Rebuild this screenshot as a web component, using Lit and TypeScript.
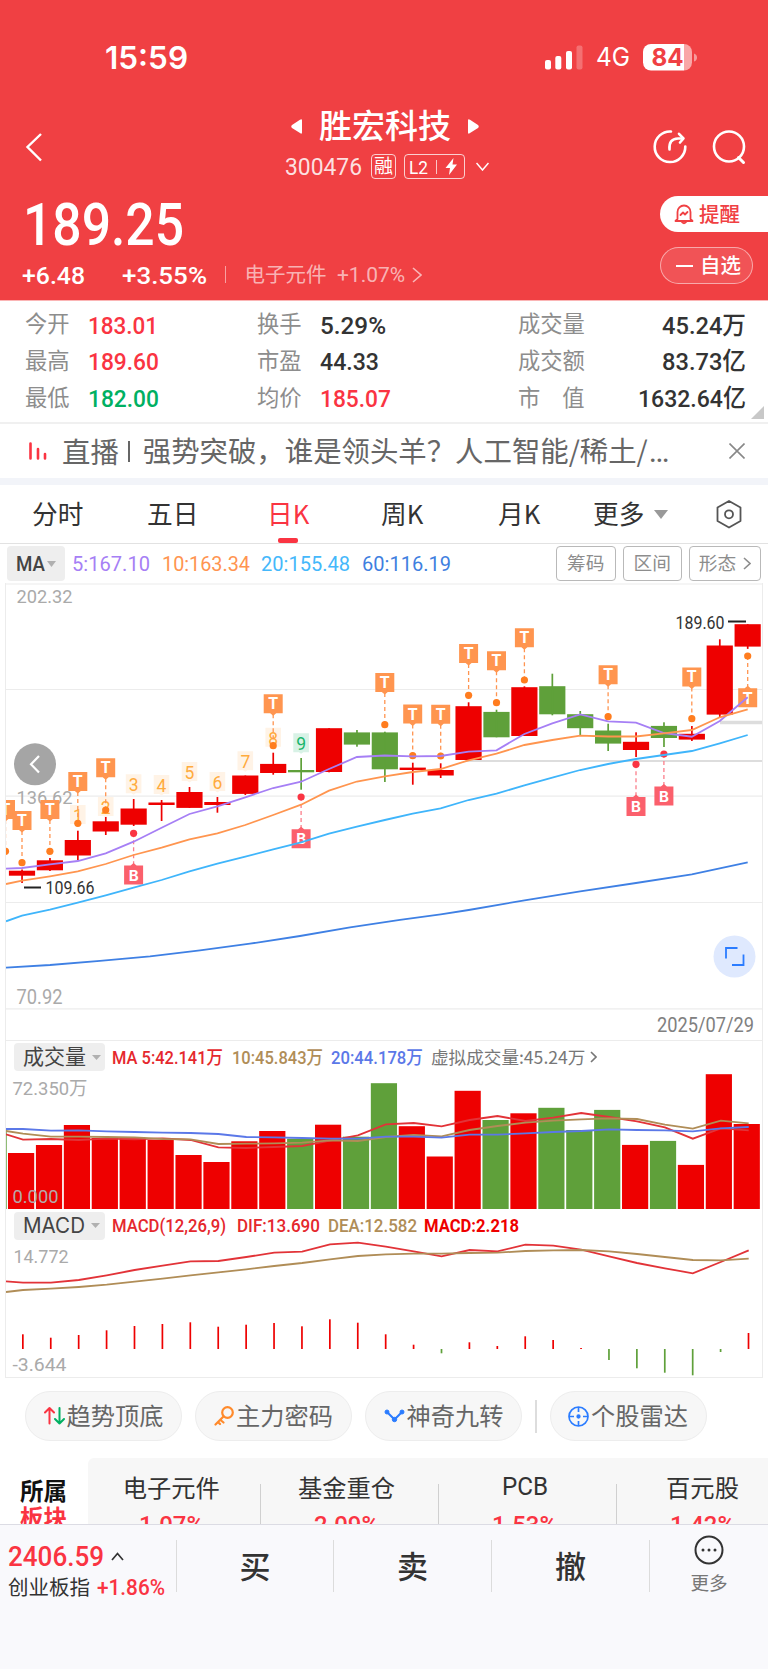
import { LitElement, html, svg, css } from "lit";
import { customElement } from "lit/decorators.js";

const STEP = 27.91;
const RED = "#ee0000";
const GREEN = "#5fa03a";

/** [bodyTop, bodyBottom, high, low, rising] in chart units */
const CANDLES: [number, number, number, number, number][] = [
  [870.7, 875.7, 869.5, 883, 1], [860.3, 870.3, 858, 871, 1], [840, 855.5, 830.7, 860, 1],
  [821.3, 831.5, 817, 835, 1], [808.5, 824.7, 799, 826, 1], [802.5, 805, 800, 821, 1],
  [792, 807.9, 787, 808, 1], [802, 805, 797, 812.7, 1], [775.5, 793.9, 775.5, 795, 1],
  [763.9, 773, 752.7, 774.7, 1], [770, 772.3, 758, 789.7, 0], [728.2, 772, 728.2, 772.3, 1],
  [732.4, 744.6, 730, 746.7, 0], [732.4, 769.3, 731.7, 782, 0], [767.6, 770, 762.7, 784.7, 1],
  [770, 775.5, 763.3, 778, 1], [706.2, 760, 702.3, 760, 1], [711.9, 737.3, 709.7, 737.3, 0],
  [687.2, 736, 686.3, 736, 1], [686.2, 714.3, 673.7, 715.3, 0], [714.2, 728.2, 711, 735.3, 0],
  [730.5, 743.6, 723.7, 751, 0], [741.8, 750, 732.3, 757, 1], [725.9, 738, 722.3, 747, 0],
  [733.8, 739.6, 726, 741, 1], [645.5, 714.6, 639.3, 718, 1], [624.2, 646.6, 624.2, 648.9, 1],
];

const MA5 = [868.7, 868, 864.3, 861, 853.3, 841.7, 827.7, 814, 806.3, 797.3, 788, 781.7, 769, 757, 755.5, 756.3, 756, 751.7, 750.3, 734, 723.3, 714.5, 721.3, 722.7, 733, 736.7, 721, 697.3];
const MA10 = [884, 880.7, 876.3, 871.3, 864, 855, 847.7, 839.3, 833.3, 825, 815, 804.7, 790.7, 781.5, 776.3, 772, 769, 760.3, 753.7, 745, 740, 735.7, 736.5, 736.5, 733.3, 730, 717.3, 709.3];
const MA20 = [921.3, 915.7, 909.7, 902.7, 895.3, 887.7, 880, 871.3, 863.7, 856.7, 849.3, 842.3, 833.7, 826.7, 820, 813.7, 808.3, 800, 793.7, 785.3, 777.7, 770, 764, 759, 755, 751, 743.3, 735];
const MA60 = "6,967.7 50,965 100,960.8 150,956.3 200,950.3 250,943.7 300,936 350,927.3 400,919.8 440.7,914.3 468.7,910 524.5,900.3 580.2,891.3 636,883 691.8,874.3 747.7,862.3";

/** [x, boxTop, dotY] */
const SELLS: [number, number, number][] = [
  [5.5, 800, 851.3], [22, 811, 862.7], [49.9, 800, 851.3], [77.8, 772, 823.3], [105.7, 758.3, 810],
  [273.2, 694.3, 745.7], [384.8, 673, 724.7], [412.7, 704.5, 755.7], [440.7, 704.8, 756], [468.6, 643.9, 695.3],
  [496.5, 651.2, 702.7], [524.4, 628.3, 680], [608.1, 665.3, 716.7], [691.8, 667.4, 718.7],
];
const BUYS: [number, number, number][] = [
  [133.6, 865.5, 833.3], [301.1, 829.2, 797], [636, 797, 764.3], [663.9, 786.6, 754],
];
const COUNTS: [number, number, string][] = [
  [77.8, 805, "1"], [105.7, 797, "2"], [133.6, 774.3, "3"], [161.5, 775, "4"], [189.5, 762, "5"],
  [217.4, 772, "6"], [245.3, 751.3, "7"], [273.2, 727.7, "8"], [301.1, 733.3, "9"],
];

const VOLUMES: [number, number][] = [
  [1153, 1], [1145, 1], [1125, 1], [1138, 1], [1138.3, 1], [1140, 1], [1155, 1], [1162, 1], [1141.3, 1],
  [1131, 1], [1138.7, 0], [1124.7, 1], [1136.7, 0], [1083.2, 0], [1126.2, 1], [1156.5, 1], [1090.8, 1],
  [1120, 0], [1113.3, 1], [1107.8, 0], [1130, 0], [1109.9, 0], [1144.9, 1], [1140.9, 0], [1164.9, 1],
  [1074.2, 1], [1124, 1],
];
const VOL5 = [1134.3, 1139.7, 1139, 1140, 1138.7, 1139.3, 1138.3, 1140, 1147.3, 1148, 1147, 1146, 1140.7, 1135.3, 1124.3, 1123, 1126.3, 1120, 1116, 1121, 1117.7, 1113, 1117, 1121.3, 1127.3, 1138.7, 1128.3, 1130.3];
const VOL10 = [1131, 1133.7, 1136.7, 1136.7, 1137, 1137.4, 1139, 1139.3, 1144, 1143.7, 1143.4, 1142.7, 1140.3, 1141, 1137, 1135, 1136.3, 1130, 1126, 1122.7, 1120.7, 1119.3, 1118.3, 1119, 1124.7, 1128.7, 1120.7, 1123.3];
const VOL20 = [1129, 1129, 1130.7, 1130.4, 1131.3, 1132, 1132.7, 1133, 1134, 1137, 1137.3, 1138, 1138.7, 1138.7, 1136.7, 1136.6, 1137.7, 1134.7, 1134.7, 1133.3, 1132, 1131, 1129.3, 1130, 1130.4, 1131.3, 1128.3, 1127];

const DIF = [1281.3, 1282.7, 1282.7, 1280, 1275.3, 1270, 1265.7, 1261.3, 1261, 1257, 1252.7, 1251.7, 1244.3, 1242.7, 1246.7, 1251.3, 1256.3, 1250, 1251.3, 1244.7, 1245.7, 1249.7, 1256.3, 1263, 1268.3, 1273.3, 1262, 1250.3];
const DEA = [1292, 1290, 1288.7, 1287, 1284.7, 1281.7, 1278.7, 1275.3, 1272.3, 1269.3, 1266, 1263, 1259.3, 1256, 1254.3, 1253.7, 1253.7, 1253, 1252.7, 1251, 1250.3, 1250, 1251.3, 1254, 1257, 1260, 1260.3, 1258.7];
const HIST = [1334.3, 1337.7, 1335, 1330.3, 1326, 1324, 1322.3, 1326.7, 1324.7, 1323, 1326.3, 1319.3, 1322.7, 1334.3, 1344.7, 1353.3, 1342.3, 1346, 1336.3, 1340, 1348, 1360, 1368.3, 1372.7, 1375.3, 1352, 1333];
const ZERO = 1349;

const polyline = (ys: number[], x0 = 22) =>
  ys.map((y, i) => (i === 0 ? `6,${y}` : `${(x0 + (i - 1) * STEP).toFixed(1)},${y}`)).join(" ");

/** Numeric label condensed to a fixed width; cap is the digit height. */
const fit = (text: string, width: number, cap: number, cls = "") => html`
  <svg class="fit ${cls}" width=${width} height=${cap}>
    <text x="0" y=${cap} font-size=${(cap / 0.711).toFixed(2)} textLength=${width} lengthAdjust="spacingAndGlyphs">${text}</text>
  </svg>`;

/** The same label placed inside a chart; y is its baseline. */
const label = (text: string, x: number, y: number, width: number, cap: number, fill: string) => svg`
  <text x=${x} y=${y} fill=${fill} font-size=${(cap / 0.711).toFixed(2)} textLength=${width} lengthAdjust="spacingAndGlyphs">${text}</text>`;

@customElement("app-root")
export class AppRoot extends LitElement {
  static styles = css`
    :host { display: block; width: 768px; height: 1669px; overflow: hidden; background: #fff;
      font-family: "Noto Sans CJK SC", sans-serif; color: #333; }
    * { box-sizing: border-box; }
    svg { display: block; flex: none; }
    .fit { overflow: visible; font-family: Roboto, "Noto Sans CJK SC", sans-serif; fill: currentColor; font-weight: 500; }
    .light { font-weight: 400; }
    .ui { font-family: Inter, sans-serif; font-weight: 600; }
    .uilight { font-family: Inter, sans-serif; font-weight: 400; }
    .heavy { font-weight: 700; }
    .row { display: flex; align-items: center; }
    .red { color: #fa3442; }
    .green { color: #00b062; }

    .head { background: #f04043; color: #fff; height: 301px; border-bottom: 1px solid #fbb5b5; }
    .status { height: 70px; padding: 44px 71px 0 105px; justify-content: space-between; }
    .status .right { display: flex; align-items: center; gap: 13px; }
    .nav { height: 118px; padding: 36px 21px 0 25px; display: grid; grid-template-columns: 100px 1fr 100px; align-items: center; }
    .mid { display: flex; flex-direction: column; align-items: center; height: 82px; }
    .title { display: flex; align-items: center; gap: 17px; height: 37px; margin: 2px 0 0 -2px; }
    .name { font-size: 33px; line-height: 33px; font-weight: 500; margin-top: -4px; }
    .code { display: flex; align-items: center; height: 25px; margin-top: 9px; margin-left: 2px; color: rgba(255,255,255,.85); }
    .tag { border: 1.5px solid rgba(255,255,255,.75); border-radius: 4px; height: 25px; width: 25px; margin-left: 9px; font-size: 19px; line-height: 20px; text-align: center; color: #fff; }
    .lv { border: 1.5px solid rgba(255,255,255,.75); border-radius: 4px; height: 25px; width: 61px; margin: 0 11px 0 8px; display: flex; align-items: center; padding-left: 4px; gap: 8px; color: #fff; }
    .lv i { width: 1px; height: 14px; background: rgba(255,255,255,.7); }
    .acts { display: flex; gap: 23px; justify-content: flex-end; }
    .quote { display: flex; justify-content: space-between; }
    .price { padding: 15px 0 0 23px; }
    .chg { display: flex; align-items: center; height: 24px; margin: 18px 0 0 -1.5px; }
    .chg .b { margin-left: 37px; }
    .chg .bar { width: 1px; height: 17px; margin: 0 19px 0 18px; background: rgba(255,255,255,.5); }
    .faint { color: rgba(255,255,255,.62); }
    .ind { font-size: 20.5px; line-height: 24px; margin: -4px 10px 0 0; }
    .go { margin-left: 7px; }
    .side { width: 108px; padding-top: 8px; }
    .remind { height: 36px; background: #fff; border-radius: 18px 0 0 18px; padding-left: 14px; color: #f04043; gap: 5px; }
    .follow { height: 37px; width: 93px; margin-top: 15px; border-radius: 19px; border: 1.5px solid rgba(255,255,255,.5); background: rgba(255,255,255,.1); padding-left: 15px; gap: 7px; }
    .pt { font-size: 20.5px; line-height: 24px; font-weight: 500; margin-top: -3px; }

    .stats { height: 123px; padding: 5px 22px 0 25px; display: grid; grid-template-columns: 63px 169px 62.5px 198.5px 1fr; grid-auto-rows: 36.7px; align-items: center; position: relative; border-bottom: 2px solid #f0f0f0; }
    .stats .k { font-size: 22.3px; line-height: 30px; color: #8d8d8d; margin-top: -4px; white-space: pre; }
    .stats .end { display: flex; justify-content: space-between; align-items: center; }
    .wide { letter-spacing: 22px; }
    .corner { position: absolute; right: 4px; bottom: 3px; }

    .live { height: 54px; padding: 0 23.5px 0 29px; color: #666; font-size: 28.4px; line-height: 40px; }
    .live b { font-weight: 400; margin: -1px 0 0 15px; }
    .live i { width: 2px; height: 21px; background: #666; margin: 0 13px 0 9px; }
    .live span { flex: 1; margin-top: -1px; white-space: nowrap; }
    .live em { font: 400 31px/40px Roboto, sans-serif; letter-spacing: 0; margin-left: 1px; }
    .band { height: 7px; background: #f2f4f9; }

    .tabs { height: 59px; padding: 0 26px 0 32px; position: relative; border-bottom: 1px solid #e2e2e2; display: grid;
      grid-template-columns: 115px 120px 114px 117px 95px 123px 26px; align-items: center; font-size: 25.7px; line-height: 36px; }
    .tabs > span { margin-top: -3px; white-space: nowrap; }
    .tabs .more { display: flex; align-items: center; gap: 10px; }
    .tabs .more svg { margin-top: 4px; }
    .tabs .on { position: relative; }
    .on::after { content: ""; position: absolute; left: 11px; top: 43px; width: 20px; height: 5px; border-radius: 2px; background: #fa3442; }

    .ma { height: 39px; padding: 0 7px; }
    .chip { background: #eeeeee; border-radius: 4px; color: #444; }
    .ma .chip { width: 58px; height: 35px; padding-left: 9px; gap: 2px; margin-right: 7px; }
    .vals { gap: 11.5px; flex: 1; }
    .v5 { color: #a67ff5; } .v10 { color: #ff9450; } .v20 { color: #45b8fb; } .v60 { color: #3f7fe0; }
    .crim { color: #e5282d; } .tan { color: #b08d57; } .blue { color: #5b78e8; } .pure { color: #ee0000; }
    .btns { gap: 7px; }
    .btn { height: 35px; width: 59.5px; border: 1.5px solid #b9b9b9; border-radius: 4px; font-size: 18.7px; line-height: 26px; color: #8d8d8d; justify-content: center; gap: 7px; white-space: nowrap; }
    .btn span { margin-top: -3px; }
    .btn.long { width: 72px; }

    .charts { margin: 0 5px; border: 1px solid #ececec; border-top: 0; height: 795px; }
    .charts svg.plot { font-family: Roboto, "Noto Sans CJK SC", sans-serif; }
    .sub { padding: 2px 0 0 8px; }
    .volhead { height: 33px; border-top: 1px solid #ececec; padding-top: 0; }
    .macdhead { height: 31px; }
    .sub .chip { height: 28px; padding-left: 9px; gap: 6px; font-size: 21px; line-height: 28px; width: 91px; margin-right: 7px; }
    .sub .chip span { margin-top: -4px; white-space: nowrap; }
    .g7 { margin-left: 7px; } .g8 { margin-left: 8px; } .g9 { margin-left: 9px; } .g11 { margin-left: 11px; }
    .virt { font-size: 17.6px; color: #777; white-space: nowrap; line-height: 24px; margin: 0 5px 0 8px; }

    .tools { height: 80px; padding: 13px 0 17px 25px; gap: 13px; }
    .pill { flex: none; width: 157px; height: 50px; border-radius: 25px; background: #f7f7f7; border: 1.5px solid #ededed; justify-content: center; gap: 2px; font-size: 24.2px; line-height: 34px; color: #666; }
    .pill span { margin-top: -3px; white-space: nowrap; }
    .tools i { width: 1.500px; height: 33px; background: #ddd; }

    .sector { height: 66px; display: grid; grid-template-columns: 88px 1fr; overflow: hidden; }
    .own { padding: 18.5px 0 0 20px; font-size: 23.5px; line-height: 27.5px; font-weight: 700; color: #111; }
    .own div + div { color: #fa3442; }
    .list { background: #f7f7f7; border-radius: 6px 6px 0 0; display: grid; grid-template-columns: 172.500px 178px 178px 178px; }
    .cell { border-right: 1px solid #d0d0d0; height: 60px; margin-top: 26px; display: flex; flex-direction: column; align-items: center; }
    .cell div { font-size: 24.3px; line-height: 30px; height: 30px; margin: -12px 5px 0 0; white-space: nowrap; }
    .cell div svg { margin-top: 5px; }
    .cell > svg { margin: 12.500px 5px 0 0; }

    .foot { height: 145px; background: #f9f9fc; border-top: 1.5px solid #dcdce4; display: grid; grid-template-columns: 176px 158px 158px 158px 118px; }
    .foot > div { height: 52px; margin-top: 15px; border-right: 1px solid #dcdcdc; }
    .foot > div.idx { height: 100px; padding: 6px 0 0 8px; border: 0; }
    .idx .row + .row { margin-top: 9px; }
    .idx .nm { font-size: 20.5px; line-height: 26px; width: 89px; margin-top: -2px; white-space: nowrap; }
    .foot .up { margin-left: 7px; }
    .trade { display: flex; justify-content: center; font-size: 31px; line-height: 36px; font-weight: 500; padding-top: 7px; }
    .trade:nth-child(2) { border-left: 1px solid #dcdcdc; }
    .foot > div.etc { border: 0; margin-top: 9.500px; height: 80px; display: flex; flex-direction: column; align-items: center; font-size: 18.6px; line-height: 26px; color: #777; gap: 4px; }
  `;

  private chevron(w: number, h: number, color = "currentColor", sw = 1.6) {
    return html`<svg width=${w} height=${h} fill="none" stroke=${color} stroke-width=${sw}><path d="M1 1L${w - 1} ${h / 2}L1 ${h - 1}" /></svg>`;
  }

  private caret(w = 9, h = 5, color = "#b0b0b0") {
    return html`<svg width=${w} height=${h} fill=${color}><path d="M0 0H${w}L${w / 2} ${h}Z" /></svg>`;
  }

  private header() {
    return html`<section class="head">
      <div class="status row">
        ${fit("15:59", 83, 22.5, "ui")}
        <div class="right">
          <svg width="38" height="27" fill="#fff">
            <rect x="0" y="16" width="6" height="9.5" rx="2" /><rect x="10.3" y="12" width="6" height="13.5" rx="2" />
            <rect x="21" y="7" width="6" height="18.5" rx="2" /><rect x="31.5" y="1.5" width="6" height="24" rx="2" opacity=".25" />
          </svg>
          ${fit("4G", 34, 18, "uilight")}
          <svg width="54" height="27">
            <path d="M8 0H41V26.5H8a8 8 0 0 1-8-8V8a8 8 0 0 1 8-8Z" fill="#fff" />
            <path d="M41 0a8 8 0 0 1 8 8v10.5a8 8 0 0 1-8 8Z" fill="#f9a6a7" />
            <path d="M51 9.5q3 1 3 4t-3 4Z" fill="#f79a9b" />
            <text x="8.5" y="22" font-family="Inter" font-weight="700" font-size="24" textLength="32" lengthAdjust="spacingAndGlyphs" fill="#f04043">84</text>
          </svg>
        </div>
      </div>
      <div class="nav">
        <svg width="20" height="30" fill="none" stroke="#fff" stroke-width="2.4"><path d="M16 2L2.5 15L16 28.5" /></svg>
        <div class="mid">
          <div class="title">
            <svg width="11" height="15" fill="#fff"><path d="M11 1.5V13.5Q11 15.5 9 14L1 9Q-.5 7.5 1 6L9 .8Q11 -.5 11 1.5Z" /></svg>
            <div class="name">胜宏科技</div>
            <svg width="11" height="15" fill="#fff"><path d="M0 1.5V13.5Q0 15.5 2 14L10 9Q11.5 7.5 10 6L2 .8Q0 -.5 0 1.5Z" /></svg>
          </div>
          <div class="code">
            ${fit("300476", 77, 17, "light")}
            <div class="tag">融</div>
            <div class="lv">${fit("L2", 19, 13.5, "light")}<i></i>
              <svg width="13" height="17" fill="#fff"><path d="M8.500 0L.5 10H5L4 17L12 6.500H7.500Z" /></svg></div>
            <svg width="13" height="9" fill="none" stroke="#fff" stroke-width="1.5"><path d="M.5 1L6.5 8L12.500 1" /></svg>
          </div>
        </div>
        <div class="acts">
          <svg width="36" height="36" fill="none" stroke="#fff" stroke-width="2.6" stroke-linecap="round" stroke-linejoin="round">
            <path d="M19 2.500A15.300 15.300 0 1 0 33.300 17.500" /><path d="M17.500 20.500Q16.500 9.800 26 9.500H30.500" /><path d="M27 4.800L31.500 9.500L28 13.500" />
          </svg>
          <svg width="36" height="36" fill="none" stroke="#fff" stroke-width="2.6" stroke-linecap="round">
            <circle cx="18" cy="17.5" r="15" /><path d="M27.500 28.500L32.500 33.500" stroke-width="3" />
          </svg>
        </div>
      </div>
      <div class="quote">
        <div class="price">
          ${fit("189.25", 161, 41.5)}
          <div class="chg">
            ${fit("+6.48", 63, 17.5)}
            <div class="b">${fit("+3.55%", 85, 17.5)}</div>
            <div class="bar"></div>
            <div class="faint ind">电子元件</div>
            <div class="faint">${fit("+1.07%", 68, 15, "light")}</div>
            <div class="faint go">${this.chevron(10, 16)}</div>
          </div>
        </div>
        <div class="side">
          <div class="remind row">
            <svg width="20" height="21" fill="none" stroke="#f04043" stroke-width="1.8" stroke-linejoin="round" stroke-linecap="round">
              <path d="M3.500 15V8a6.500 6.500 0 0 1 13 0V15l2 2H1.500Z" /><path d="M7.500 17.500q2.500 3.500 5 0" /><path d="M6.500 11l2.500-2.500 2 2L13.500 8" />
            </svg>
            <span class="pt">提醒</span>
          </div>
          <div class="follow row">
            <svg width="17" height="2" fill="#fff"><rect width="17" height="2" /></svg><span class="pt">自选</span>
          </div>
        </div>
      </div>
    </section>`;
  }

  private stats() {
    const v = (t: string, w: number, cls = "") => html`<div class=${cls}>${fit(t, w, 17.5)}</div>`;
    return html`<section class="stats">
      <div class="k">今开</div>${v("183.01", 70, "red")}<div class="k">换手</div>${v("5.29%", 66)}<div class="end"><div class="k">成交量</div>${v("45.24万", 84)}</div>
      <div class="k">最高</div>${v("189.60", 71, "red")}<div class="k">市盈</div>${v("44.33", 59)}<div class="end"><div class="k">成交额</div>${v("83.73亿", 84)}</div>
      <div class="k">最低</div>${v("182.00", 71, "green")}<div class="k">均价</div>${v("185.07", 71, "red")}<div class="end"><div class="k"><span class="wide">市</span>值</div>${v("1632.64亿", 108)}</div>
      <svg class="corner" width="13" height="13" fill="#c8c8c8"><path d="M13 0V13H0Z" /></svg>
    </section>`;
  }

  private live() {
    return html`<section class="live row">
        <svg width="18" height="18" stroke="#fa3442" stroke-width="2.6" stroke-linecap="round"><path d="M1.5 1.5V16.5M9 7V16.5M16 12V16.5" /></svg>
        <b>直播</b><i></i><span>强势突破，谁是领头羊？人工智能/稀土/<em>…</em></span>
        <svg width="16" height="16" stroke="#888" stroke-width="1.6"><path d="M.5 .5L15.5 15.5M15.5 .5L.5 15.5" /></svg>
      </section>
      <div class="band"></div>
      <nav class="tabs">
        <span>分时</span><span>五日</span><span class="on red">日K</span><span>周K</span><span>月K</span>
        <span class="more">更多${this.caret(14, 9, "#999")}</span>
        <svg width="26" height="29" fill="none" stroke="#555" stroke-width="1.8" stroke-linejoin="round">
          <path d="M13 1L24.5 7.5V21L13 27.5L1.5 21V7.5Z" /><circle cx="13" cy="14.3" r="4" />
        </svg>
      </nav>
      <div class="ma row">
        <div class="chip row">${fit("MA", 29, 15)}${this.caret(9, 6)}</div>
        <div class="vals row">
          <span class="v5">${fit("5:167.10", 78, 15, "light")}</span>
          <span class="v10">${fit("10:163.34", 88, 15, "light")}</span>
          <span class="v20">${fit("20:155.48", 89, 15, "light")}</span>
          <span class="v60">${fit("60:116.19", 89, 15, "light")}</span>
        </div>
        <div class="btns row">
          <div class="btn row"><span>筹码</span></div><div class="btn row"><span>区间</span></div>
          <div class="btn long row"><span>形态</span>${this.chevron(8, 13)}</div>
        </div>
      </div>`;
  }

  private sell([x, top, dot]: [number, number, number]) {
    return svg`<line x1=${x} y1=${top + 20} x2=${x} y2=${dot} stroke="#ff9450" stroke-width="1.3" stroke-dasharray="4 3" />
      <circle cx=${x} cy=${dot} r="3.6" fill="#ff7d1f" />
      <path d="M${x - 9.5} ${top}h19v19h-6.5l-3 2.5l-3-2.5h-6.5Z" fill="#ff954f" />
      <text x=${x} y=${top + 15} text-anchor="middle" font-family="Inter" font-size="15.5" font-weight="700" fill="#fff">T</text>`;
  }

  private buy([x, top, dot]: [number, number, number]) {
    return svg`<line x1=${x} y1=${dot} x2=${x} y2=${top} stroke="#fb7f8b" stroke-width="1.3" stroke-dasharray="4 3" />
      <circle cx=${x} cy=${dot} r="3.6" fill="#fa3442" />
      <path d="M${x - 9.5} ${top}h6.5l3-2.5l3 2.5h6.5v19h-19Z" fill="#fb606c" />
      <text x=${x} y=${top + 15} text-anchor="middle" font-family="Inter" font-size="15" font-weight="700" fill="#fff">B</text>`;
  }

  private priceChart() {
    const line = (pts: string, color: string) => svg`<polyline points=${pts} fill="none" stroke=${color} stroke-width="1.800" />`;
    return html`<svg class="plot" width="756" height="457" viewBox="6 583 756 457">
      ${[584, 689.5, 796.2, 902.5, 1008.8].map((y) => svg`<line x1="6" x2="762" y1=${y} y2=${y} stroke="#ececec" stroke-width="1.2" />`)}
      ${label("202.32", 16.5, 603, 56, 13.5, "#aaa")}
      ${label("136.62", 16.5, 804, 56, 13.5, "#aaa")}
      ${label("70.92", 16.5, 1004.3, 46, 14, "#aaa")}
      ${label("2025/07/29", 657, 1032, 97, 14, "#808080")}
      <line x1="720" x2="762" y1="722.5" y2="722.5" stroke="#ddd" stroke-width="3.5" />
      <line x1="465" x2="762" y1="761" y2="761" stroke="#ddd" stroke-width="2" />
      ${COUNTS.map(([x, y, t]) => {
        const last = t === "9";
        return svg`<path d="M${x - 7.8} ${y}h15.6v19h-5.6l-2.2 1.5l-2.2-1.5h-5.6Z" fill=${last ? "#d8f2e6" : "#fff3e6"} />
          <text x=${x} y=${y + 17} text-anchor="middle" font-size="17.5" fill=${last ? "#18b56b" : "#ffab3d"}>${t}</text>`;
      })}
      ${CANDLES.map(([t, b, h, l, up], i) => {
        const x = 22 + i * STEP;
        return svg`<rect x=${x - 13.1} y=${t} width="26.2" height=${b - t} fill=${up ? RED : GREEN} />
          <rect x=${x - 0.8} y=${h} width="1.7" height=${l - h} fill=${up ? RED : GREEN} />`;
      })}
      ${SELLS.map((s) => this.sell(s))}
      ${BUYS.map((s) => this.buy(s))}
      <line x1="747.7" x2="747.7" y1="656" y2="687" stroke="#ff9450" stroke-width="1.3" stroke-dasharray="4 3" />
      <circle cx="747.7" cy="656" r="3.6" fill="#ff7d1f" />
      <path d="M738.2 688.3h6.5l3-2.5l3 2.5h6.5v19h-19Z" fill="#ff954f" />
      <text x="747.7" y="703.5" text-anchor="middle" font-family="Inter" font-size="15.5" font-weight="700" fill="#fff">T</text>
      ${line(polyline(MA5), "#a67ff5")}${line(polyline(MA10), "#ff954f")}${line(polyline(MA20), "#3fb5fb")}${line(MA60, "#3f80e4")}
      <path d="M24 887.5H41M728 621.5H746" stroke="#222" stroke-width="1.8" />
      ${label("109.66", 45.5, 894.3, 49, 12.5, "#333")}
      ${label("189.60", 675.5, 628.6, 49, 12.5, "#333")}
      <circle cx="35" cy="764.3" r="21" fill="#a5a5a5" />
      <path d="M39 756L31 764.3L39 772.5" fill="none" stroke="#fff" stroke-width="2.2" />
      <circle cx="734.5" cy="956.5" r="21" fill="#dfe9fe" />
      <path d="M726 958.5V948H737.5M743.5 954.5V965H732" fill="none" stroke="#2b7cff" stroke-width="1.8" />
    </svg>`;
  }

  private volumeChart() {
    return html`<div class="sub volhead row">
        <div class="chip row"><span>成交量</span>${this.caret()}</div>
        <span class="crim">${fit("MA 5:42.141万", 111, 13)}</span>
        <span class="tan g9">${fit("10:45.843万", 91, 13)}</span>
        <span class="blue g8">${fit("20:44.178万", 92, 13)}</span>
        <span class="virt">虚拟成交量:45.24万</span>
        ${this.chevron(7, 12, "#777")}
      </div>
      <svg class="plot" width="756" height="136" viewBox="6 1073 756 136">
        <rect x="6" y="1130" width="1" height="79" fill=${GREEN} opacity=".7" />
        ${label("72.350万", 12.5, 1095, 75, 13.5, "#aaa")}
        ${VOLUMES.map(([y, up], i) => svg`<rect x=${8 + i * STEP} y=${y} width="26.2" height=${1209 - y} fill=${up ? RED : GREEN} />`)}
        <g fill="none" stroke-width="1.800">
          <polyline points=${polyline(VOL5, 23)} stroke="#e23338" />
          <polyline points=${polyline(VOL10, 23)} stroke="#b08d57" />
          <polyline points=${polyline(VOL20, 23)} stroke="#5b78e8" />
        </g>
        ${label("0.000", 12.5, 1202.5, 46, 13.5, "#b5aaaa")}
      </svg>`;
  }

  private macdChart() {
    return html`<div class="sub macdhead row">
        <div class="chip row">${fit("MACD", 62, 15, "uilight")}${this.caret()}</div>
        <span class="crim">${fit("MACD(12,26,9)", 114, 12.8)}</span>
        <span class="crim g11">${fit("DIF:13.690", 83, 12.8)}</span>
        <span class="tan g8">${fit("DEA:12.582", 89, 12.8)}</span>
        <span class="pure g7">${fit("MACD:2.218", 95, 12.8, "heavy")}</span>
      </div>
      <svg class="plot" width="756" height="136" viewBox="6 1240 756 136">
        ${label("14.772", 13.5, 1263, 55, 13.5, "#aaa")}
        ${label("-3.644", 12.5, 1370.5, 54, 13.5, "#aaa")}
        <g fill="none" stroke-width="1.800">
          <polyline points=${polyline(DIF, 23)} stroke="#e23338" />
          <polyline points=${polyline(DEA, 23)} stroke="#b08d57" />
        </g>
        ${HIST.map((y, i) => svg`<rect x=${22 + i * STEP} y=${Math.min(y, ZERO)} width="1.7" height=${Math.abs(ZERO - y)} fill=${y > ZERO ? GREEN : RED} />`)}
      </svg>`;
  }

  private tools() {
    return html`<section class="tools row">
      <div class="pill row">
        <svg width="21" height="20" fill="none" stroke-width="2" stroke-linejoin="round" stroke-linecap="round">
          <path d="M5.5 17.500V2M1 6.500L5.5 2L10 6.500" stroke="#fa3442" /><path d="M15.500 2V17.500M11 13L15.500 17.500L20 13" stroke="#00b062" /></svg>
        <span>趋势顶底</span></div>
      <div class="pill row">
        <svg width="20" height="20" fill="none" stroke="#ff8a2b" stroke-width="2.200" stroke-linecap="round" stroke-linejoin="round">
          <circle cx="13.500" cy="6.500" r="5.300" /><path d="M9.500 10.500L1.500 18.500M6.500 14L9.500 16.500M4 16L6 18" /></svg>
        <span>主力密码</span></div>
      <div class="pill row">
        <svg width="21" height="20" fill="#2b7cff" stroke="#2b7cff">
          <path d="M3 6L10.500 13.500L18 6" fill="none" stroke-width="2" /><circle cx="3" cy="6" r="2" /><circle cx="18" cy="6" r="2" /><circle cx="10.500" cy="13.500" r="2.200" /></svg>
        <span>神奇九转</span></div>
      <i></i>
      <div class="pill row">
        <svg width="21" height="21" fill="none" stroke="#2b7cff" stroke-width="1.7">
          <circle cx="10.5" cy="10.5" r="9.5" /><path d="M10.5 1V6M10.5 15V20M1 10.5H6M15 10.5H20" /><circle cx="10.5" cy="10.5" r="1.3" fill="#2b7cff" /></svg>
        <span>个股雷达</span></div>
    </section>`;
  }

  private sector() {
    const cells: [string, string][] = [["电子元件", "1.07%"], ["基金重仓", "2.09%"], ["PCB", "1.53%"], ["百元股", "1.42%"]];
    return html`<section class="sector">
      <div class="own"><div>所属</div><div>板块</div></div>
      <div class="list">
        ${cells.map(([n, p]) => html`<div class="cell red"><div style="color:#333">${n === "PCB" ? fit(n, 46, 18, "light") : n}</div>${fit(p, 65, 17.5)}</div>`)}
      </div>
    </section>`;
  }

  private footer() {
    return html`<footer class="foot">
      <div class="idx">
        <div class="row red">${fit("2406.59", 96, 20)}
          <svg class="up" width="13" height="9" fill="none" stroke="#333" stroke-width="1.7"><path d="M1 8L6.5 1.5L12 8" /></svg></div>
        <div class="row"><span class="nm">创业板指</span><span class="red">${fit("+1.86%", 68, 15.5)}</span></div>
      </div>
      ${["买", "卖", "撤"].map((t) => html`<div class="trade">${t}</div>`)}
      <div class="etc">
        <svg width="30" height="30" fill="none" stroke="#333" stroke-width="2"><circle cx="15" cy="15" r="13.5" />
          <g fill="#333" stroke="none"><circle cx="9" cy="15" r="1.5" /><circle cx="15" cy="15" r="1.5" /><circle cx="21" cy="15" r="1.5" /></g></svg>
        更多</div>
    </footer>`;
  }

  render() {
    return html`${this.header()}${this.stats()}${this.live()}
      <section class="charts">${this.priceChart()}${this.volumeChart()}${this.macdChart()}</section>
      ${this.tools()}${this.sector()}${this.footer()}`;
  }
}
